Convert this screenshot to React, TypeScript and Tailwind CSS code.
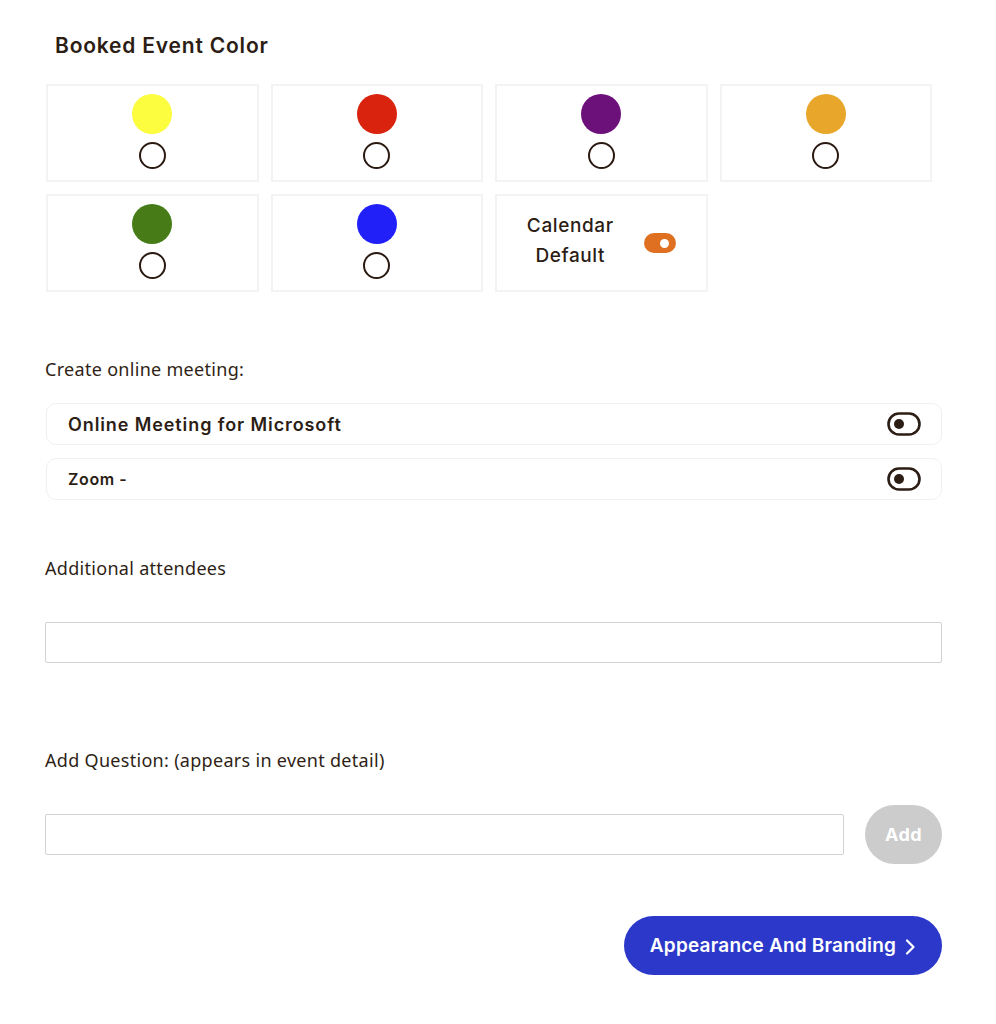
import React from "react";

const colors = ["#fdfd3f", "#d9230f", "#6c117a", "#e8a62a", "#467b18", "#2220f8"];

function ColorCard({ color }: { color: string }) {
  return (
    <div className="h-[98px] border-2 border-[#f3f3f3] flex flex-col items-center pt-[8px]">
      <div className="w-[40px] h-[40px] rounded-full" style={{ backgroundColor: color }} />
      <div className="mt-[8px] w-[27px] h-[27px] rounded-full border-[2.5px] border-[#2a1a12]" />
    </div>
  );
}

function ToggleIcon() {
  return (
    <svg width="34" height="24" viewBox="0 0 34 24" fill="none">
      <rect x="1.5" y="1.5" width="31" height="21" rx="10.5" stroke="#2c1d15" strokeWidth="2.6" />
      <circle cx="12" cy="12" r="5" fill="#2c1d15" />
    </svg>
  );
}

export default function App() {
  const label = "text-[18px] tracking-[0.3px] text-[#2f1f16] leading-[24px]";
  const sans = { fontFamily: "'Noto Sans', 'Open Sans', sans-serif" };
  const inter = { fontFamily: "Inter, 'Noto Sans', sans-serif" };
  return (
    <div className="bg-white w-[996px] min-h-[1024px] pt-[32px] pl-[45px]" style={inter}>
      <div className="w-[897px]">
        <h2 className="ml-[10px] text-[21px] leading-[28px] font-semibold text-[#2c1d15] tracking-[0.8px]">
          Booked Event Color
        </h2>
        <div className="mt-[24px] ml-[1px] w-[886px] grid grid-cols-4 gap-x-[12px] gap-y-[12px]">
          {colors.map((c) => (
            <ColorCard key={c} color={c} />
          ))}
          <div className="h-[98px] border-2 border-[#f3f3f3] flex items-center justify-center gap-[30px]">
            <div className="text-[19px] leading-[30px] font-medium tracking-[0.6px] text-[#2c1d15] text-center -mt-[4px]">
              Calendar
              <br />
              Default
            </div>
            <div className="w-[32px] h-[20px] rounded-full bg-[#e07021] flex items-center justify-end pr-[7px]">
              <div className="w-[9px] h-[9px] rounded-full bg-white" />
            </div>
          </div>
        </div>

        <p className={`mt-[65px] ${label}`} style={sans}>
          Create online meeting:
        </p>
        <div className="mt-[22px] ml-[1px] flex flex-col gap-[13px] w-[896px]">
          <div className="h-[42px] rounded-[10px] border-[1.5px] border-[#f0f0f0] flex items-center justify-between pl-[21px] pr-[20px]">
            <span className="text-[18px] font-semibold tracking-[0.9px] text-[#2c1d15]">Online Meeting for Microsoft</span>
            <ToggleIcon />
          </div>
          <div className="h-[42px] rounded-[10px] border-[1.5px] border-[#f0f0f0] flex items-center justify-between pl-[21px] pr-[20px]">
            <span className="text-[16px] font-semibold tracking-[0.6px] text-[#2c1d15]">Zoom -</span>
            <ToggleIcon />
          </div>
        </div>

        <p className={`mt-[56px] ${label}`} style={sans}>
          Additional attendees
        </p>
        <input
          className="mt-[42px] block w-[897px] h-[41px] border border-[#d2d2d2] rounded-[2px] outline-none px-3"
          type="text"
        />

        <p className={`mt-[85px] ${label}`} style={sans}>
          Add Question: (appears in event detail)
        </p>
        <div className="mt-[33px] flex items-center gap-[21px]">
          <input
            className="block w-[799px] h-[41px] border border-[#d2d2d2] rounded-[2px] outline-none px-3"
            type="text"
          />
          <button className="w-[77px] h-[59px] rounded-full bg-[#cccccc] text-white text-[18px] font-bold tracking-[0.4px]">
            Add
          </button>
        </div>

        <div className="mt-[52px] flex justify-end">
          <button className="w-[318px] h-[59px] rounded-full bg-[#2b38c9] text-white text-[19px] font-semibold tracking-[0.2px] flex items-center justify-center gap-[8px] pt-[2px]">
            <span>Appearance And Branding</span>
            <svg width="12" height="18" viewBox="0 0 12 18" fill="none">
              <path d="M3 2.5L9.5 9L3 15.5" stroke="white" strokeWidth="2.2" strokeLinecap="round" strokeLinejoin="round" />
            </svg>
          </button>
        </div>
      </div>
    </div>
  );
}
